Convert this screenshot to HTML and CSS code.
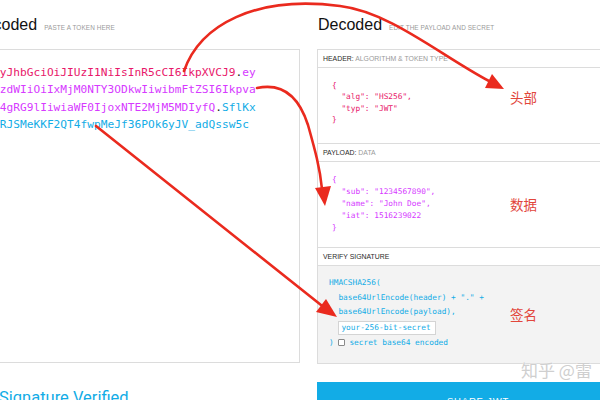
FILE: index.html
```html
<!DOCTYPE html>
<html lang="zh">
<head>
<meta charset="utf-8">
<title>JWT</title>
<link rel="stylesheet" href="styles.css">
</head>
<body>
<div class="page">
  <section class="col">
    <div class="col-head col-head-enc"><h2 class="title">Encoded</h2><span class="hint">PASTE A TOKEN HERE</span></div>
    <div class="token-box">
      <div class="tline"><span class="c-h">eyJhbGciOiJIUzI1NiIsInR5cCI6IkpXVCJ9</span><span class="dot">.</span><span class="c-p">ey</span></div>
      <div class="tline"><span class="c-p">JzdWIiOiIxMjM0NTY3ODkwIiwibmFtZSI6Ikpva</span></div>
      <div class="tline"><span class="c-p">G4gRG9lIiwiaWF0IjoxNTE2MjM5MDIyfQ</span><span class="dot">.</span><span class="c-s">SflKx</span></div>
      <div class="tline"><span class="c-s">wRJSMeKKF2QT4fwpMeJf36POk6yJV_adQssw5c</span></div>
    </div>
    <div class="verified">Signature Verified</div>
  </section>
  <section class="col">
    <div class="col-head"><h2 class="title">Decoded</h2><span class="hint">EDIT THE PAYLOAD AND SECRET</span></div>
    <div class="panel">
      <div class="label"><span class="label-key">HEADER:</span> ALGORITHM &amp; TOKEN TYPE</div>
      <div class="code code-h">{
  "alg": "HS256",
  "typ": "JWT"
}</div>
      <div class="label"><span class="label-key">PAYLOAD:</span> DATA</div>
      <div class="code code-p">{
  "sub": "1234567890",
  "name": "John Doe",
  "iat": 1516239022
}</div>
      <div class="label"><span class="label-key">VERIFY SIGNATURE</span></div>
      <div class="verify">
        <div class="vline">HMACSHA256(</div>
        <div class="vline indent">base64UrlEncode(header) + "." +</div>
        <div class="vline indent">base64UrlEncode(payload),</div>
        <div class="vline indent"><input class="secret" type="text" value="your-256-bit-secret"></div>
        <div class="vline">) <input class="chk" type="checkbox">secret base64 encoded</div>
      </div>
    </div>
    <button class="share">SHARE JWT</button>
  </section>
</div>

<svg class="arrows" width="600" height="400" viewBox="0 0 600 400">
  <g fill="none" stroke="#ea2a1e" stroke-width="2.6" stroke-linecap="round">
    <path d="M184,71 C200,25 255,-5 340,6 C390,12 440,55 489,81"/>
    <path d="M257,88 C285,82 300,100 308,125 C315,150 320,168 322,189"/>
    <path d="M96,126 L321,305"/>
  </g>
  <g fill="#ea2a1e">
    <polygon points="504,89 485,88 492,74"/>
    <polygon points="325,206 315,188 331,186"/>
    <polygon points="337,317 316,312 326,299"/>
  </g>
</svg>

<div class="note n1">头部</div>
<div class="note n2">数据</div>
<div class="note n3">签名</div>
<div class="watermark">知乎 @雷</div>
</body>
</html>
```

FILE: styles.css
```css
html, body {
  margin: 0;
  padding: 0;
}

body {
  width: 600px;
  height: 400px;
  overflow: hidden;
  position: relative;
  background: #fff;
  font-family: "Liberation Sans", Arial, sans-serif;
  color: #222;
}

.page {
  display: flex;
  gap: 17px;
  margin-left: -22px;
}

.col {
  flex: 0 0 322px;
  display: flex;
  flex-direction: column;
}

.col-head {
  height: 49px;
  box-sizing: border-box;
  padding: 15px 0 0 1px;
  display: flex;
  align-items: baseline;
  gap: 7px;
}

.col-head-enc {
  margin-left: -5px;
}

.title {
  margin: 0;
  font-size: 16px;
  line-height: 20px;
  font-weight: normal;
  color: #111;
}

.hint {
  font-size: 6.4px;
  color: #9a9a9a;
  letter-spacing: 0.1px;
}

.token-box {
  height: 314px;
  box-sizing: border-box;
  border: 1px solid #dcdcdc;
  padding: 14px 14px;
  font-family: "DejaVu Sans Mono", "Liberation Mono", monospace;
  font-size: 11.2px;
  line-height: 17.25px;
}

.tline {
  white-space: pre;
}

.c-h { color: #e8176a; }
.c-p { color: #d63aff; }
.c-s { color: #12ace6; }
.dot { color: #222; }

.verified {
  margin: 25px 0 0 21px;
  font-family: Roboto, "Liberation Sans", sans-serif;
  font-size: 16.5px;
  line-height: 20px;
  color: #12ace6;
}

.panel {
  border: 1px solid #dcdcdc;
}

.label {
  height: 18px;
  box-sizing: border-box;
  border-bottom: 1px solid #dcdcdc;
  padding-left: 5px;
  font-size: 6.9px;
  line-height: 17px;
  color: #9a9a9a;
  text-transform: uppercase;
}

.label-key {
  color: #2a2a2a;
}

.code {
  box-sizing: border-box;
  border-bottom: 1px solid #dcdcdc;
  padding-left: 14px;
  white-space: pre;
  font-family: "DejaVu Sans Mono", "Liberation Mono", monospace;
  font-size: 7.8px;
}

.code-h {
  height: 76px;
  padding-top: 12px;
  line-height: 11.4px;
  color: #e8176a;
}

.code-p {
  height: 86px;
  padding-top: 12px;
  line-height: 12px;
  color: #d63aff;
}

.verify {
  height: 97px;
  box-sizing: border-box;
  padding: 10px 0 0 11px;
  background: #f3f3f3;
  font-family: "DejaVu Sans Mono", "Liberation Mono", monospace;
  font-size: 7.8px;
  line-height: 14.5px;
  color: #12ace6;
}

.vline {
  white-space: pre;
}

.indent {
  padding-left: 9.4px;
}

.secret {
  display: block;
  margin: 1px 0 1px;
  width: 98px;
  height: 14px;
  box-sizing: border-box;
  border: 1px solid #d4d4d4;
  padding: 0 2px;
  background: #fff;
  font-family: "DejaVu Sans Mono", "Liberation Mono", monospace;
  font-size: 7.8px;
  color: #12ace6;
  outline: none;
}

.chk {
  appearance: none;
  -webkit-appearance: none;
  display: inline-block;
  width: 7px;
  height: 7px;
  margin: 0 4px 0 0;
  border: 1px solid #8a8a8a;
  border-radius: 1px;
  background: #fff;
  vertical-align: -1px;
}

.share {
  margin-top: 18px;
  height: 36px;
  border: 0;
  background: #12ace6;
  color: #fff;
  font-family: "Liberation Sans", Arial, sans-serif;
  font-size: 9.5px;
  letter-spacing: 0.8px;
}

.arrows {
  position: absolute;
  left: 0;
  top: 0;
  pointer-events: none;
}

.note {
  position: absolute;
  left: 510px;
  font-family: "Noto Sans CJK SC", sans-serif;
  font-size: 13.5px;
  line-height: 16px;
  color: #e2463b;
}

.n1 { top: 89px; }
.n2 { top: 196px; }
.n3 { top: 306px; }

.watermark {
  position: absolute;
  left: 521px;
  top: 361px;
  font-family: "Noto Sans CJK SC", sans-serif;
  font-size: 17px;
  line-height: 18px;
  white-space: nowrap;
  color: #cfcfcf;
  text-shadow: 0 0 1px #fff, 0 0 1px #fff;
}
```
